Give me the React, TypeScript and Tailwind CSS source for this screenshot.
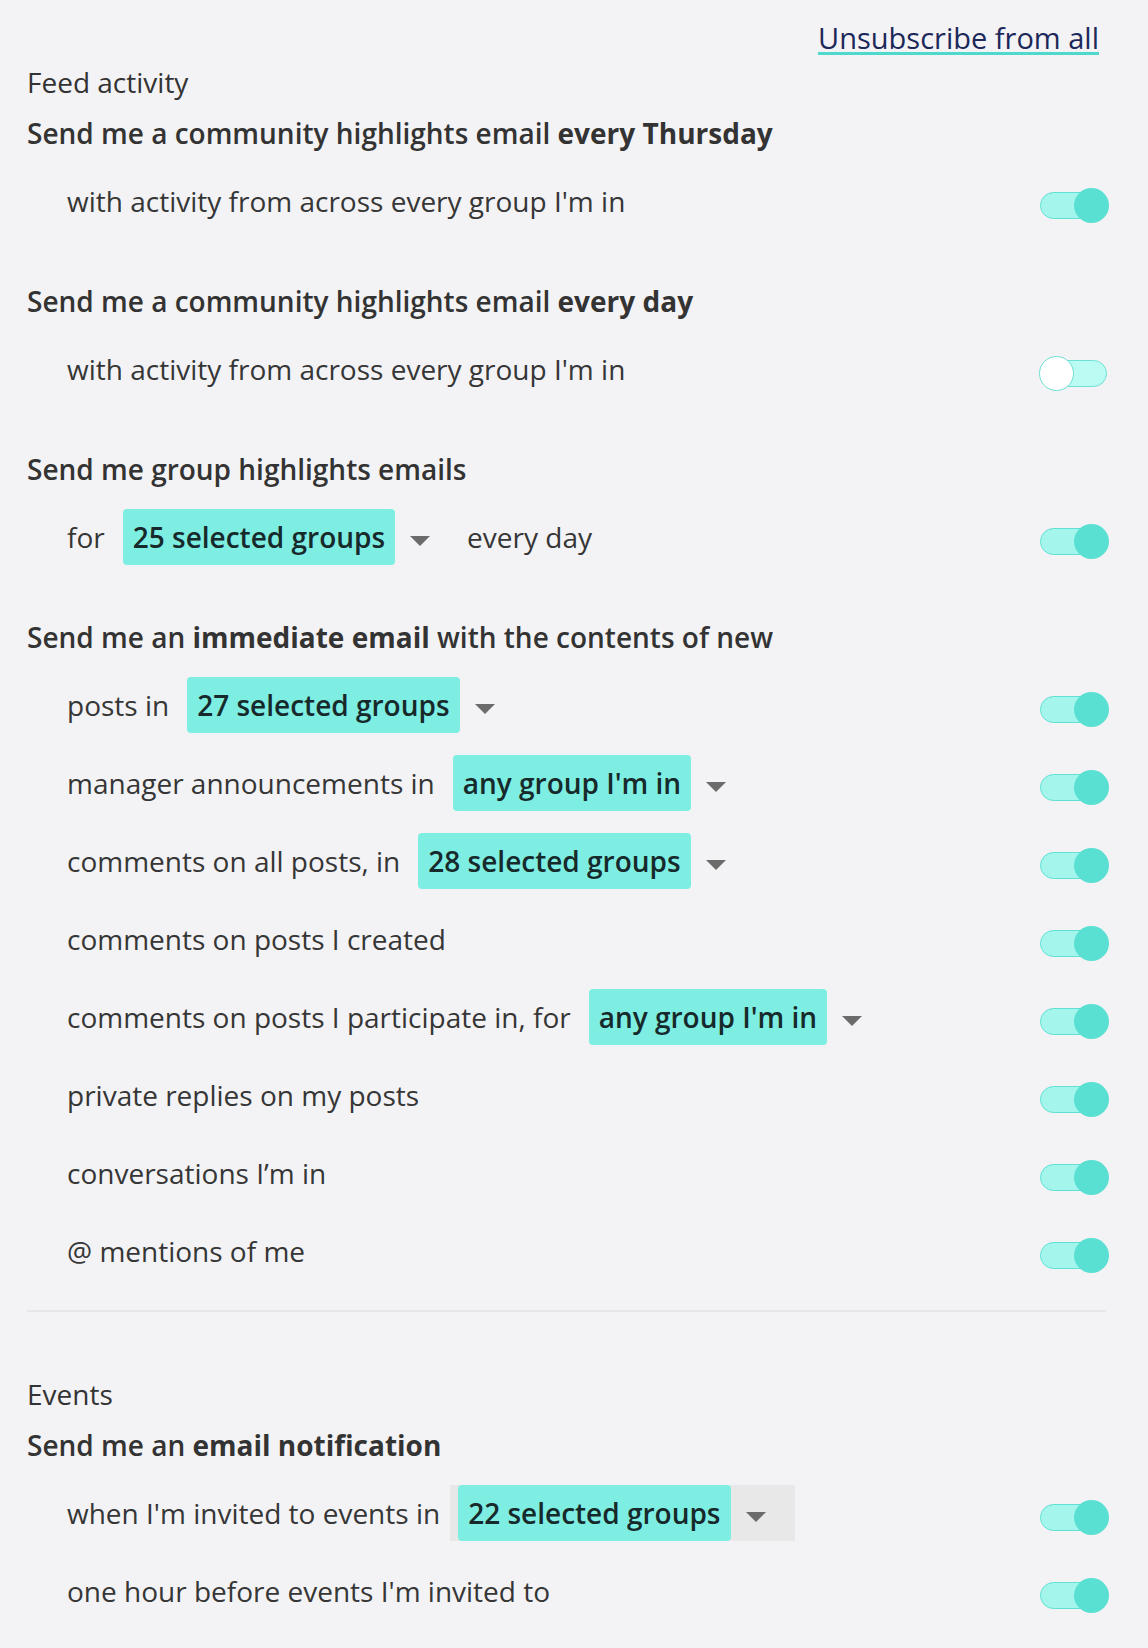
import React from 'react'

type Chip = { label: string; boxed?: boolean }

type Row = {
  before: string
  chip?: Chip
  after?: string
  on: boolean
}

const Toggle = ({ on }: { on: boolean }) => (
  <div className="relative w-[70px] h-[35px] flex-shrink-0 translate-y-[4px]">
    <div
      className={
        on
          ? 'absolute left-[1px] right-[3px] top-[4px] h-[27px] rounded-full border border-[#5fe0d3] bg-[#a4f6ed]'
          : 'absolute left-[1px] right-[2px] top-[4px] h-[27px] rounded-full border border-[#6ee0d4] bg-[#bafcf4]'
      }
    />
    {on ? (
      <div className="absolute right-0 top-0 w-[35px] h-[35px] rounded-full bg-[#5ae0d3]" />
    ) : (
      <div className="absolute left-0 top-0 w-[35px] h-[35px] rounded-full bg-white border border-[#6ee0d4]" />
    )}
  </div>
)

const Caret = () => (
  <svg width="20" height="10" viewBox="0 0 20 10" className="translate-y-[4px]">
    <path d="M0 0 L20 0 L10 10 Z" fill="#6b6b6b" />
  </svg>
)

const Dropdown = ({ chip }: { chip: Chip }) => (
  <div
    className={
      'flex items-center h-[56px] pl-[8px] pr-[29px] gap-[15px] ' + (chip.boxed ? 'bg-[#e8e8e9]' : '')
    }>
    <span className="flex items-center h-full px-[10px] rounded-[4px] bg-[#7eeee3] font-semibold text-[#172a2b]">
      {chip.label}
    </span>
    <Caret />
  </div>
)

const SettingRow = ({ row }: { row: Row }) => (
  <div className="flex items-center h-[56px] pl-[40px]">
    <div className="flex-1 flex items-center">
      <span className="mr-[10px]">{row.before}</span>
      {row.chip && <Dropdown chip={row.chip} />}
      {row.after && <span className="ml-[8px]">{row.after}</span>}
    </div>
    <Toggle on={row.on} />
  </div>
)

const Group = ({ heading, rows, first }: { heading: React.ReactNode; rows: Row[]; first?: boolean }) => (
  <div className={first ? 'mt-[15px]' : 'mt-[54px]'}>
    <h3 className="h-[36px] leading-[36px] font-semibold text-[#333333]">{heading}</h3>
    <div className="mt-[22px] flex flex-col gap-[22px]">
      {rows.map((row, i) => (
        <SettingRow key={i} row={row} />
      ))}
    </div>
  </div>
)

export default function App() {
  return (
    <div className="min-h-screen bg-[#f3f3f5] pl-[27px] pr-[39px] pt-[20px] pb-[40px] font-['Open_Sans',sans-serif] text-[28px] text-[#363636]">
      <div className="flex justify-end h-[36px] pr-[10px]">
        <a
          href="#"
          className="text-[29px] leading-[36px] text-[#1b2859] underline decoration-[#4fd8cc] decoration-[3px] underline-offset-[3px]">
          Unsubscribe from all
        </a>
      </div>

      {/* Feed activity */}
      <div className="mt-[8px] h-[36px] leading-[36px] text-[#333333]">Feed activity</div>

      <Group
        first
        heading={
          <>
            Send me a community highlights email <b className="font-bold">every Thursday</b>
          </>
        }
        rows={[{ before: "with activity from across every group I'm in", on: true }]}
      />

      <Group
        heading={
          <>
            Send me a community highlights email <b className="font-bold">every day</b>
          </>
        }
        rows={[{ before: "with activity from across every group I'm in", on: false }]}
      />

      <Group
        heading="Send me group highlights emails"
        rows={[{ before: 'for', chip: { label: '25 selected groups' }, after: 'every day', on: true }]}
      />

      <Group
        heading={
          <>
            Send me an <b className="font-bold">immediate email</b> with the contents of new
          </>
        }
        rows={[
          { before: 'posts in', chip: { label: '27 selected groups' }, on: true },
          { before: 'manager announcements in', chip: { label: "any group I'm in" }, on: true },
          { before: 'comments on all posts, in', chip: { label: '28 selected groups' }, on: true },
          { before: 'comments on posts I created', on: true },
          { before: 'comments on posts I participate in, for', chip: { label: "any group I'm in" }, on: true },
          { before: 'private replies on my posts', on: true },
          { before: 'conversations I’m in', on: true },
          { before: '@ mentions of me', on: true },
        ]}
      />

      <div className="mt-[31px] mr-[3px] h-[2px] bg-[#e6e6ea]" />

      {/* Events */}
      <div className="mt-[64px] h-[36px] leading-[36px] text-[#333333]">Events</div>

      <Group
        first
        heading={
          <>
            Send me an <b className="font-bold">email notification</b>
          </>
        }
        rows={[
          { before: "when I'm invited to events in", chip: { label: '22 selected groups', boxed: true }, on: true },
          { before: "one hour before events I'm invited to", on: true },
        ]}
      />
    </div>
  )
}
